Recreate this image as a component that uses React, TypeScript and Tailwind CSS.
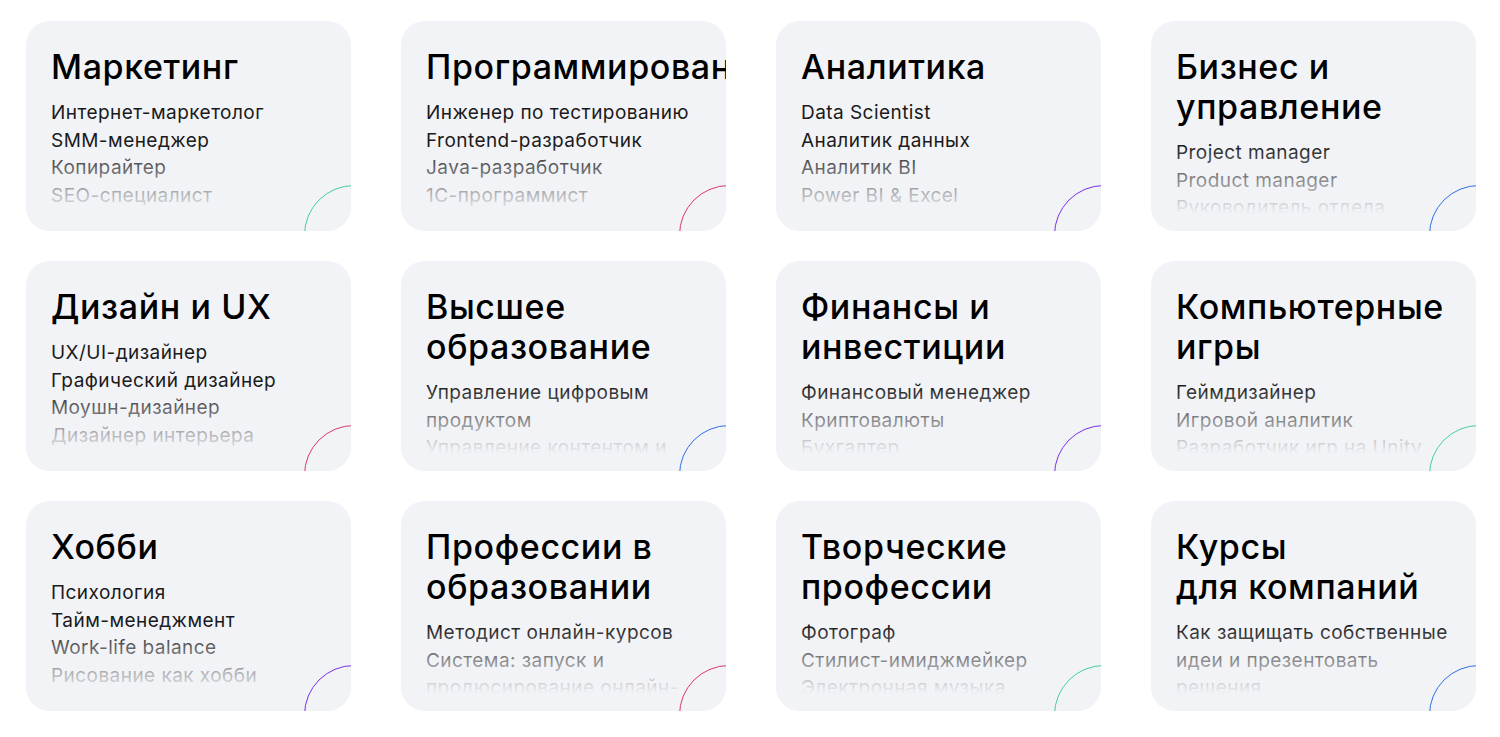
import React from "react";

type Card = {
  title: React.ReactNode;
  items: string[];
  ring: string;
};

const cards: Card[] = [
  { title: "Маркетинг", items: ["Интернет-маркетолог", "SMM-менеджер", "Копирайтер", "SEO-специалист", "Таргетолог"], ring: "border-[#45cf98]" },
  { title: "Программирование", items: ["Инженер по тестированию", "Frontend-разработчик", "Java-разработчик", "1С-программист", "Python-разработчик"], ring: "border-[#d9376e]" },
  { title: "Аналитика", items: ["Data Scientist", "Аналитик данных", "Аналитик BI", "Power BI & Excel", "Системный аналитик"], ring: "border-[#7b2ee6]" },
  { title: "Бизнес и управление", items: ["Project manager", "Product manager", "Руководитель отдела", "HR-менеджер"], ring: "border-[#2f6fe4]" },
  { title: "Дизайн и UX", items: ["UX/UI-дизайнер", "Графический дизайнер", "Моушн-дизайнер", "Дизайнер интерьера", "Веб-дизайнер"], ring: "border-[#d9376e]" },
  { title: "Высшее образование", items: ["Управление цифровым продуктом", "Управление контентом и медиа", "Бакалавриат"], ring: "border-[#2f6fe4]" },
  { title: "Финансы и инвестиции", items: ["Финансовый менеджер", "Криптовалюты", "Бухгалтер", "Инвестиции"], ring: "border-[#7b2ee6]" },
  { title: "Компьютерные игры", items: ["Геймдизайнер", "Игровой аналитик", "Разработчик игр на Unity", "3D-художник"], ring: "border-[#45cf98]" },
  { title: "Хобби", items: ["Психология", "Тайм-менеджмент", "Work-life balance", "Рисование как хобби", "Фотография"], ring: "border-[#7b2ee6]" },
  { title: "Профессии в образовании", items: ["Методист онлайн-курсов", "Система: запуск и продюсирование онлайн-школы"], ring: "border-[#d9376e]" },
  { title: "Творческие профессии", items: ["Фотограф", "Стилист-имиджмейкер", "Электронная музыка", "Актёрское мастерство"], ring: "border-[#45cf98]" },
  {
    title: (
      <>
        Курсы
        <br />
        для компаний
      </>
    ),
    items: ["Как защищать собственные идеи и презентовать решения"],
    ring: "border-[#2f6fe4]",
  },
];

function CourseCard({ title, items, ring }: Card) {
  return (
    <div className="relative h-[210px] overflow-hidden rounded-[24px] bg-[#f2f3f7] pt-[26px] pl-[25px] pr-[12px]">
      <h3 className="text-[34px] leading-[40px] font-medium tracking-[0.6px] text-black">{title}</h3>
      <ul className="mt-[12px] text-[19px] leading-[27.5px] tracking-[0.45px] text-[#1a1a1a]">
        {items.map((item) => (
          <li key={item}>{item}</li>
        ))}
      </ul>
      <div className="pointer-events-none absolute inset-x-0 top-[124px] bottom-0 bg-[linear-gradient(to_bottom,rgba(242,243,247,0)_0px,#f2f3f7_69px)]" />
      <div className={`absolute -right-[53px] -bottom-[54px] h-[100px] w-[100px] rounded-full border-[1.5px] ${ring}`} />
    </div>
  );
}

export default function App() {
  return (
    <div className="min-h-[737px] bg-white font-['Inter','Noto_Sans',sans-serif]">
      <div className="grid w-[1476px] grid-cols-4 gap-x-[50px] gap-y-[30px] pt-[21px] pl-[26px]">
        {cards.map((c, i) => (
          <CourseCard key={i} {...c} />
        ))}
      </div>
    </div>
  );
}
